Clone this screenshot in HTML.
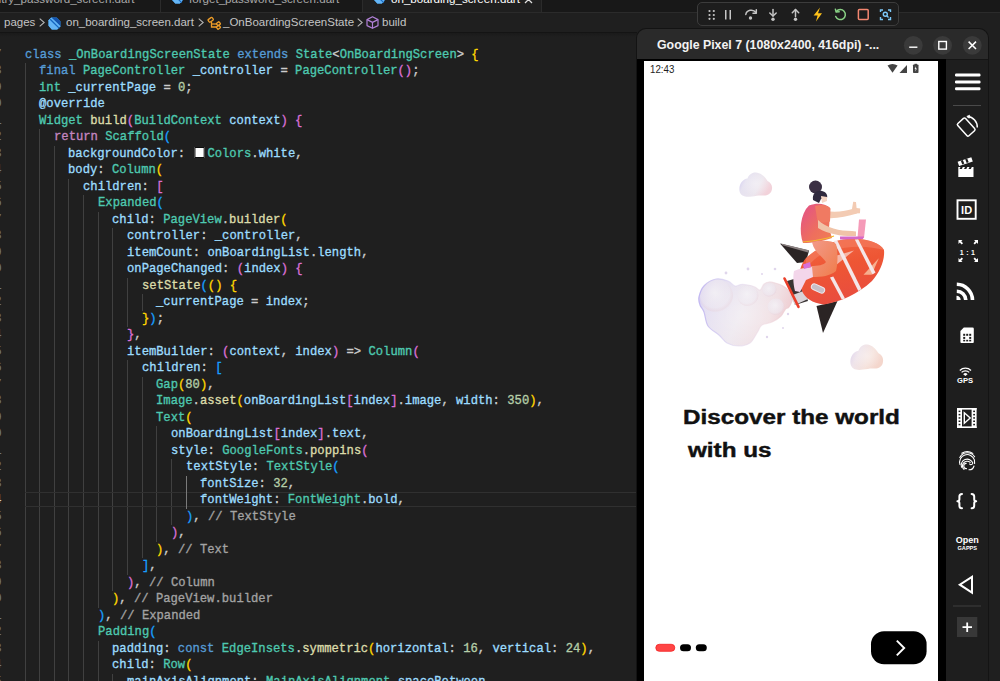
<!DOCTYPE html>
<html><head><meta charset="utf-8">
<style>
html,body{margin:0;padding:0;}
body{width:1000px;height:681px;overflow:hidden;background:#1f1f1f;position:relative;font-family:"Liberation Sans",sans-serif;}
.abs{position:absolute;}
#tabs{position:absolute;left:0;top:0;width:1000px;height:13px;background:#181818;border-bottom:1px solid #2b2b2b;box-sizing:border-box;overflow:hidden;}
.tab{position:absolute;top:0;height:12px;overflow:hidden;}
.tabtxt{position:absolute;white-space:nowrap;font-size:11.6px;line-height:12px;top:-7.4px;color:#a8a8a8;}
#crumbs{position:absolute;left:0;top:13px;width:637px;height:20px;background:#1f1f1f;}
.cr{position:absolute;white-space:nowrap;font-size:11.5px;line-height:14px;top:2.4px;color:#c4c4c4;}
#editor{position:absolute;left:0;top:33px;width:637px;height:648px;overflow:hidden;--x0:24.5px;--y0:13.8px;--lh:16.5px;--cw:7.32px;}
.ln{position:absolute;white-space:pre;font-family:"Liberation Mono",monospace;font-size:13.4px;line-height:16.5px;height:16.5px;transform:scaleX(0.9104);transform-origin:0 0;-webkit-text-stroke:0.35px currentColor;}
.ln span{-webkit-text-stroke:0.35px currentColor;}
.ig{position:absolute;width:1px;background:#404040;}
.lnum{position:absolute;right:calc(637px - 1.8px);white-space:pre;font-family:"Liberation Mono",monospace;font-size:13.4px;line-height:16.5px;height:16.5px;text-align:right;}
.sq{display:inline-block;width:11.53px;height:10.6px;background:#fdfdfd;border:1px solid #0c0c0c;box-sizing:border-box;margin-left:2px;margin-right:3px;vertical-align:-1.2px;}
#tb{position:absolute;left:697px;top:2px;width:202px;height:24px;box-sizing:border-box;border:1px solid #3c3c3c;border-radius:5px;background:#1d1d1d;}
#win{position:absolute;left:637px;top:28.5px;width:351px;height:660px;background:#2a2a2a;border-radius:9px 9px 0 0;overflow:hidden;box-shadow:0 0 0 1px #131313;}
#title{position:absolute;left:20px;top:9.2px;font-size:12.35px;font-weight:bold;color:#f2f2f2;white-space:nowrap;}
.wb{position:absolute;top:6.5px;width:19px;height:19px;border-radius:50%;background:#3b3b3b;}
#screenwrap{position:absolute;left:0;top:30.4px;width:309px;height:640px;background:#000;}
#screen{position:absolute;left:7px;top:1.9px;width:294px;height:640px;background:#fff;overflow:hidden;}
#side{position:absolute;left:309px;top:30.4px;width:42px;height:640px;background:#1e1e1e;border-top:1px solid #151515;}
</style></head><body>
<div id="tabs">
  <div class="tab" style="left:0;width:160px;border-right:1px solid #2b2b2b;"><div class="tabtxt" style="left:-22px;">reentry_password_screen.dart</div></div>
  <div class="tab" style="left:161px;width:201px;border-right:1px solid #2b2b2b;"><div class="abs" style="left:11px;top:-10.3px;"><svg width="11" height="11" viewBox="0 0 12 12"><path d="M3 0.5 L8 0.5 L11.5 4 L11.5 8.5 L8.5 11.5 L3.5 11.5 L0.5 8 L0.5 3 Z" fill="#42a5f5"/><path d="M3 0.5 L8 0.5 L11.5 4 L11.5 8.5 Z" fill="#0d47a1" opacity="0.85"/><path d="M0.5 3 L3 0.5 L11.5 8.5 L8.5 11.5 L3.5 11.5 L0.5 8 Z" fill="#64b5f6"/><path d="M2 2 L10.5 10.5" stroke="#1565c0" stroke-width="1.2"/></svg></div><div class="tabtxt" style="left:28px;">forget_password_screen.dart</div></div>
  <div class="tab" style="left:363px;width:178px;height:13px;background:#1f1f1f;border-right:1px solid #2b2b2b;"><div class="abs" style="left:11px;top:-10.3px;"><svg width="11" height="11" viewBox="0 0 12 12"><path d="M3 0.5 L8 0.5 L11.5 4 L11.5 8.5 L8.5 11.5 L3.5 11.5 L0.5 8 L0.5 3 Z" fill="#42a5f5"/><path d="M3 0.5 L8 0.5 L11.5 4 L11.5 8.5 Z" fill="#0d47a1" opacity="0.85"/><path d="M0.5 3 L3 0.5 L11.5 8.5 L8.5 11.5 L3.5 11.5 L0.5 8 Z" fill="#64b5f6"/><path d="M2 2 L10.5 10.5" stroke="#1565c0" stroke-width="1.2"/></svg></div><div class="tabtxt" style="left:28px;color:#fff;">on_boarding_screen.dart</div><svg class="abs" style="left:161px;top:-5px" width="9" height="9" viewBox="0 0 9 9"><path d="M1 1L8 8M8 1L1 8" stroke="#e0e0e0" stroke-width="1.3"/></svg></div>
</div>
<div id="crumbs">
  <div class="cr" style="left:4px;">pages</div>
  <svg class="abs" style="left:38.5px;top:5.3px" width="6" height="9" viewBox="0 0 6 9"><path d="M0.7 0.6 L5.2 4.5 L0.7 8.4" fill="none" stroke="#b5b5b5" stroke-width="1.1"/></svg>
  <div class="abs" style="left:48px;top:3px;"><svg width="13" height="13" viewBox="0 0 12 12"><path d="M3 0.5 L8 0.5 L11.5 4 L11.5 8.5 L8.5 11.5 L3.5 11.5 L0.5 8 L0.5 3 Z" fill="#42a5f5"/><path d="M3 0.5 L8 0.5 L11.5 4 L11.5 8.5 Z" fill="#0d47a1" opacity="0.85"/><path d="M0.5 3 L3 0.5 L11.5 8.5 L8.5 11.5 L3.5 11.5 L0.5 8 Z" fill="#64b5f6"/><path d="M2 2 L10.5 10.5" stroke="#1565c0" stroke-width="1.2"/></svg></div>
  <div class="cr" style="left:66px;">on_boarding_screen.dart</div>
  <svg class="abs" style="left:197.8px;top:5.3px" width="6" height="9" viewBox="0 0 6 9"><path d="M0.7 0.6 L5.2 4.5 L0.7 8.4" fill="none" stroke="#b5b5b5" stroke-width="1.1"/></svg>
  <svg class="abs" style="left:207px;top:3px" width="15" height="14" viewBox="0 0 15 14"><g fill="none" stroke="#ee9d28" stroke-width="1.3"><rect x="1.2" y="2.2" width="5" height="3.2" rx="1" transform="rotate(-35 3.7 3.8)"/><path d="M4.5 5.5 L4.5 11 L9.5 11"/><path d="M4.5 8 L10 8"/><rect x="9.8" y="6.3" width="3.3" height="3" rx="0.6" transform="rotate(-40 11.4 7.8)"/><rect x="9.8" y="9.8" width="3.3" height="3" rx="0.6" transform="rotate(-40 11.4 11.3)"/></g></svg>
  <div class="cr" style="left:223px;">_OnBoardingScreenState</div>
  <svg class="abs" style="left:356.5px;top:5.3px" width="6" height="9" viewBox="0 0 6 9"><path d="M0.7 0.6 L5.2 4.5 L0.7 8.4" fill="none" stroke="#b5b5b5" stroke-width="1.1"/></svg>
  <svg class="abs" style="left:366px;top:3px" width="13" height="13" viewBox="0 0 13 13"><g fill="none" stroke="#b180d7" stroke-width="1.2" stroke-linejoin="round"><path d="M6.5 0.8 L12 3.6 L12 9.6 L6.5 12.3 L1 9.6 L1 3.6 Z"/><path d="M1 3.6 L6.5 6.4 L12 3.6 M6.5 6.4 L6.5 12.3"/></g></svg>
  <div class="cr" style="left:382px;">build</div>
</div>
<div class="abs" style="left:0;top:32px;width:637px;height:1px;background:#141414;"></div>
<div class="abs" style="left:0;top:33px;width:637px;height:4px;background:linear-gradient(#1a1a1a,#1f1f1f);"></div>
<div id="editor">
<div class="ln" style="top:calc(var(--y0) + 0*var(--lh));left:calc(var(--x0) + 0*var(--cw))"><span style="color:#569cd6">class</span><span style="color:#cccccc">&nbsp;</span><span style="color:#4ec9b0">_OnBoardingScreenState</span><span style="color:#cccccc">&nbsp;</span><span style="color:#569cd6">extends</span><span style="color:#cccccc">&nbsp;</span><span style="color:#4ec9b0">State</span><span style="color:#cccccc">&lt;</span><span style="color:#4ec9b0">OnBoardingScreen</span><span style="color:#cccccc">&gt;&nbsp;</span><span style="color:#ffd700">{</span></div>
<div class="ln" style="top:calc(var(--y0) + 1*var(--lh));left:calc(var(--x0) + 2*var(--cw))"><span style="color:#569cd6">final</span><span style="color:#cccccc">&nbsp;</span><span style="color:#4ec9b0">PageController</span><span style="color:#cccccc">&nbsp;</span><span style="color:#9cdcfe">_controller</span><span style="color:#cccccc">&nbsp;=&nbsp;</span><span style="color:#4ec9b0">PageController</span><span style="color:#da70d6">()</span><span style="color:#cccccc">;</span></div>
<div class="ln" style="top:calc(var(--y0) + 2*var(--lh));left:calc(var(--x0) + 2*var(--cw))"><span style="color:#4ec9b0">int</span><span style="color:#cccccc">&nbsp;</span><span style="color:#9cdcfe">_currentPage</span><span style="color:#cccccc">&nbsp;=&nbsp;</span><span style="color:#b5cea8">0</span><span style="color:#cccccc">;</span></div>
<div class="ln" style="top:calc(var(--y0) + 3*var(--lh));left:calc(var(--x0) + 2*var(--cw))"><span style="color:#9cdcfe">@override</span></div>
<div class="ln" style="top:calc(var(--y0) + 4*var(--lh));left:calc(var(--x0) + 2*var(--cw))"><span style="color:#4ec9b0">Widget</span><span style="color:#cccccc">&nbsp;</span><span style="color:#dcdcaa">build</span><span style="color:#da70d6">(</span><span style="color:#4ec9b0">BuildContext</span><span style="color:#cccccc">&nbsp;</span><span style="color:#9cdcfe">context</span><span style="color:#da70d6">)</span><span style="color:#cccccc">&nbsp;</span><span style="color:#da70d6">{</span></div>
<div class="ln" style="top:calc(var(--y0) + 5*var(--lh));left:calc(var(--x0) + 4*var(--cw))"><span style="color:#c586c0">return</span><span style="color:#cccccc">&nbsp;</span><span style="color:#4ec9b0">Scaffold</span><span style="color:#179fff">(</span></div>
<div class="ln" style="top:calc(var(--y0) + 6*var(--lh));left:calc(var(--x0) + 6*var(--cw))"><span style="color:#9cdcfe">backgroundColor</span><span style="color:#cccccc">:&nbsp;</span><i class="sq"></i><span style="color:#4ec9b0">Colors</span><span style="color:#cccccc">.</span><span style="color:#9cdcfe">white</span><span style="color:#cccccc">,</span></div>
<div class="ln" style="top:calc(var(--y0) + 7*var(--lh));left:calc(var(--x0) + 6*var(--cw))"><span style="color:#9cdcfe">body</span><span style="color:#cccccc">:&nbsp;</span><span style="color:#4ec9b0">Column</span><span style="color:#ffd700">(</span></div>
<div class="ln" style="top:calc(var(--y0) + 8*var(--lh));left:calc(var(--x0) + 8*var(--cw))"><span style="color:#9cdcfe">children</span><span style="color:#cccccc">:&nbsp;</span><span style="color:#da70d6">[</span></div>
<div class="ln" style="top:calc(var(--y0) + 9*var(--lh));left:calc(var(--x0) + 10*var(--cw))"><span style="color:#4ec9b0">Expanded</span><span style="color:#179fff">(</span></div>
<div class="ln" style="top:calc(var(--y0) + 10*var(--lh));left:calc(var(--x0) + 12*var(--cw))"><span style="color:#9cdcfe">child</span><span style="color:#cccccc">:&nbsp;</span><span style="color:#4ec9b0">PageView</span><span style="color:#cccccc">.</span><span style="color:#dcdcaa">builder</span><span style="color:#ffd700">(</span></div>
<div class="ln" style="top:calc(var(--y0) + 11*var(--lh));left:calc(var(--x0) + 14*var(--cw))"><span style="color:#9cdcfe">controller</span><span style="color:#cccccc">:&nbsp;</span><span style="color:#9cdcfe">_controller</span><span style="color:#cccccc">,</span></div>
<div class="ln" style="top:calc(var(--y0) + 12*var(--lh));left:calc(var(--x0) + 14*var(--cw))"><span style="color:#9cdcfe">itemCount</span><span style="color:#cccccc">:&nbsp;</span><span style="color:#9cdcfe">onBoardingList</span><span style="color:#cccccc">.</span><span style="color:#9cdcfe">length</span><span style="color:#cccccc">,</span></div>
<div class="ln" style="top:calc(var(--y0) + 13*var(--lh));left:calc(var(--x0) + 14*var(--cw))"><span style="color:#9cdcfe">onPageChanged</span><span style="color:#cccccc">:&nbsp;</span><span style="color:#da70d6">(</span><span style="color:#9cdcfe">index</span><span style="color:#da70d6">)</span><span style="color:#cccccc">&nbsp;</span><span style="color:#da70d6">{</span></div>
<div class="ln" style="top:calc(var(--y0) + 14*var(--lh));left:calc(var(--x0) + 16*var(--cw))"><span style="color:#dcdcaa">setState</span><span style="color:#179fff">(</span><span style="color:#ffd700">()</span><span style="color:#cccccc">&nbsp;</span><span style="color:#ffd700">{</span></div>
<div class="ln" style="top:calc(var(--y0) + 15*var(--lh));left:calc(var(--x0) + 18*var(--cw))"><span style="color:#9cdcfe">_currentPage</span><span style="color:#cccccc">&nbsp;=&nbsp;</span><span style="color:#9cdcfe">index</span><span style="color:#cccccc">;</span></div>
<div class="ln" style="top:calc(var(--y0) + 16*var(--lh));left:calc(var(--x0) + 16*var(--cw))"><span style="color:#ffd700">}</span><span style="color:#179fff">)</span><span style="color:#cccccc">;</span></div>
<div class="ln" style="top:calc(var(--y0) + 17*var(--lh));left:calc(var(--x0) + 14*var(--cw))"><span style="color:#da70d6">}</span><span style="color:#cccccc">,</span></div>
<div class="ln" style="top:calc(var(--y0) + 18*var(--lh));left:calc(var(--x0) + 14*var(--cw))"><span style="color:#9cdcfe">itemBuilder</span><span style="color:#cccccc">:&nbsp;</span><span style="color:#da70d6">(</span><span style="color:#9cdcfe">context</span><span style="color:#cccccc">,&nbsp;</span><span style="color:#9cdcfe">index</span><span style="color:#da70d6">)</span><span style="color:#cccccc">&nbsp;=&gt;&nbsp;</span><span style="color:#4ec9b0">Column</span><span style="color:#da70d6">(</span></div>
<div class="ln" style="top:calc(var(--y0) + 19*var(--lh));left:calc(var(--x0) + 16*var(--cw))"><span style="color:#9cdcfe">children</span><span style="color:#cccccc">:&nbsp;</span><span style="color:#179fff">[</span></div>
<div class="ln" style="top:calc(var(--y0) + 20*var(--lh));left:calc(var(--x0) + 18*var(--cw))"><span style="color:#4ec9b0">Gap</span><span style="color:#ffd700">(</span><span style="color:#b5cea8">80</span><span style="color:#ffd700">)</span><span style="color:#cccccc">,</span></div>
<div class="ln" style="top:calc(var(--y0) + 21*var(--lh));left:calc(var(--x0) + 18*var(--cw))"><span style="color:#4ec9b0">Image</span><span style="color:#cccccc">.</span><span style="color:#dcdcaa">asset</span><span style="color:#ffd700">(</span><span style="color:#9cdcfe">onBoardingList</span><span style="color:#da70d6">[</span><span style="color:#9cdcfe">index</span><span style="color:#da70d6">]</span><span style="color:#cccccc">.</span><span style="color:#9cdcfe">image</span><span style="color:#cccccc">,&nbsp;</span><span style="color:#9cdcfe">width</span><span style="color:#cccccc">:&nbsp;</span><span style="color:#b5cea8">350</span><span style="color:#ffd700">)</span><span style="color:#cccccc">,</span></div>
<div class="ln" style="top:calc(var(--y0) + 22*var(--lh));left:calc(var(--x0) + 18*var(--cw))"><span style="color:#4ec9b0">Text</span><span style="color:#ffd700">(</span></div>
<div class="ln" style="top:calc(var(--y0) + 23*var(--lh));left:calc(var(--x0) + 20*var(--cw))"><span style="color:#9cdcfe">onBoardingList</span><span style="color:#da70d6">[</span><span style="color:#9cdcfe">index</span><span style="color:#da70d6">]</span><span style="color:#cccccc">.</span><span style="color:#9cdcfe">text</span><span style="color:#cccccc">,</span></div>
<div class="ln" style="top:calc(var(--y0) + 24*var(--lh));left:calc(var(--x0) + 20*var(--cw))"><span style="color:#9cdcfe">style</span><span style="color:#cccccc">:&nbsp;</span><span style="color:#4ec9b0">GoogleFonts</span><span style="color:#cccccc">.</span><span style="color:#dcdcaa">poppins</span><span style="color:#da70d6">(</span></div>
<div class="ln" style="top:calc(var(--y0) + 25*var(--lh));left:calc(var(--x0) + 22*var(--cw))"><span style="color:#9cdcfe">textStyle</span><span style="color:#cccccc">:&nbsp;</span><span style="color:#4ec9b0">TextStyle</span><span style="color:#179fff">(</span></div>
<div class="ln" style="top:calc(var(--y0) + 26*var(--lh));left:calc(var(--x0) + 24*var(--cw))"><span style="color:#9cdcfe">fontSize</span><span style="color:#cccccc">:&nbsp;</span><span style="color:#b5cea8">32</span><span style="color:#cccccc">,</span></div>
<div class="ln" style="top:calc(var(--y0) + 27*var(--lh));left:calc(var(--x0) + 24*var(--cw))"><span style="color:#9cdcfe">fontWeight</span><span style="color:#cccccc">:&nbsp;</span><span style="color:#4ec9b0">FontWeight</span><span style="color:#cccccc">.</span><span style="color:#9cdcfe">bold</span><span style="color:#cccccc">,</span></div>
<div class="ln" style="top:calc(var(--y0) + 28*var(--lh));left:calc(var(--x0) + 22*var(--cw))"><span style="color:#179fff">)</span><span style="color:#cccccc">,&nbsp;</span><span style="color:#a3a3a3">//&nbsp;TextStyle</span></div>
<div class="ln" style="top:calc(var(--y0) + 29*var(--lh));left:calc(var(--x0) + 20*var(--cw))"><span style="color:#da70d6">)</span><span style="color:#cccccc">,</span></div>
<div class="ln" style="top:calc(var(--y0) + 30*var(--lh));left:calc(var(--x0) + 18*var(--cw))"><span style="color:#ffd700">)</span><span style="color:#cccccc">,&nbsp;</span><span style="color:#a3a3a3">//&nbsp;Text</span></div>
<div class="ln" style="top:calc(var(--y0) + 31*var(--lh));left:calc(var(--x0) + 16*var(--cw))"><span style="color:#179fff">]</span><span style="color:#cccccc">,</span></div>
<div class="ln" style="top:calc(var(--y0) + 32*var(--lh));left:calc(var(--x0) + 14*var(--cw))"><span style="color:#da70d6">)</span><span style="color:#cccccc">,&nbsp;</span><span style="color:#a3a3a3">//&nbsp;Column</span></div>
<div class="ln" style="top:calc(var(--y0) + 33*var(--lh));left:calc(var(--x0) + 12*var(--cw))"><span style="color:#ffd700">)</span><span style="color:#cccccc">,&nbsp;</span><span style="color:#a3a3a3">//&nbsp;PageView.builder</span></div>
<div class="ln" style="top:calc(var(--y0) + 34*var(--lh));left:calc(var(--x0) + 10*var(--cw))"><span style="color:#179fff">)</span><span style="color:#cccccc">,&nbsp;</span><span style="color:#a3a3a3">//&nbsp;Expanded</span></div>
<div class="ln" style="top:calc(var(--y0) + 35*var(--lh));left:calc(var(--x0) + 10*var(--cw))"><span style="color:#4ec9b0">Padding</span><span style="color:#179fff">(</span></div>
<div class="ln" style="top:calc(var(--y0) + 36*var(--lh));left:calc(var(--x0) + 12*var(--cw))"><span style="color:#9cdcfe">padding</span><span style="color:#cccccc">:&nbsp;</span><span style="color:#569cd6">const</span><span style="color:#cccccc">&nbsp;</span><span style="color:#4ec9b0">EdgeInsets</span><span style="color:#cccccc">.</span><span style="color:#dcdcaa">symmetric</span><span style="color:#ffd700">(</span><span style="color:#9cdcfe">horizontal</span><span style="color:#cccccc">:&nbsp;</span><span style="color:#b5cea8">16</span><span style="color:#cccccc">,&nbsp;</span><span style="color:#9cdcfe">vertical</span><span style="color:#cccccc">:&nbsp;</span><span style="color:#b5cea8">24</span><span style="color:#ffd700">)</span><span style="color:#cccccc">,</span></div>
<div class="ln" style="top:calc(var(--y0) + 37*var(--lh));left:calc(var(--x0) + 12*var(--cw))"><span style="color:#9cdcfe">child</span><span style="color:#cccccc">:&nbsp;</span><span style="color:#4ec9b0">Row</span><span style="color:#ffd700">(</span></div>
<div class="ln" style="top:calc(var(--y0) + 38*var(--lh));left:calc(var(--x0) + 14*var(--cw))"><span style="color:#9cdcfe">mainAxisAlignment</span><span style="color:#cccccc">:&nbsp;</span><span style="color:#4ec9b0">MainAxisAlignment</span><span style="color:#cccccc">.</span><span style="color:#9cdcfe">spaceBetween</span><span style="color:#cccccc">,</span></div>
<div class="ig" style="left:calc(var(--x0) + 0*var(--cw));top:calc(var(--y0) + 1*var(--lh));height:calc(38*var(--lh))"></div>
<div class="ig" style="left:calc(var(--x0) + 2*var(--cw));top:calc(var(--y0) + 5*var(--lh));height:calc(34*var(--lh))"></div>
<div class="ig" style="left:calc(var(--x0) + 4*var(--cw));top:calc(var(--y0) + 6*var(--lh));height:calc(33*var(--lh))"></div>
<div class="ig" style="left:calc(var(--x0) + 6*var(--cw));top:calc(var(--y0) + 8*var(--lh));height:calc(31*var(--lh))"></div>
<div class="ig" style="left:calc(var(--x0) + 8*var(--cw));top:calc(var(--y0) + 9*var(--lh));height:calc(30*var(--lh))"></div>
<div class="ig" style="left:calc(var(--x0) + 10*var(--cw));top:calc(var(--y0) + 10*var(--lh));height:calc(24*var(--lh))"></div>
<div class="ig" style="left:calc(var(--x0) + 10*var(--cw));top:calc(var(--y0) + 36*var(--lh));height:calc(3*var(--lh))"></div>
<div class="ig" style="left:calc(var(--x0) + 12*var(--cw));top:calc(var(--y0) + 11*var(--lh));height:calc(22*var(--lh))"></div>
<div class="ig" style="left:calc(var(--x0) + 12*var(--cw));top:calc(var(--y0) + 38*var(--lh));height:calc(1*var(--lh))"></div>
<div class="ig" style="left:calc(var(--x0) + 14*var(--cw));top:calc(var(--y0) + 14*var(--lh));height:calc(3*var(--lh))"></div>
<div class="ig" style="left:calc(var(--x0) + 14*var(--cw));top:calc(var(--y0) + 19*var(--lh));height:calc(13*var(--lh))"></div>
<div class="ig" style="left:calc(var(--x0) + 16*var(--cw));top:calc(var(--y0) + 15*var(--lh));height:calc(1*var(--lh))"></div>
<div class="ig" style="left:calc(var(--x0) + 16*var(--cw));top:calc(var(--y0) + 20*var(--lh));height:calc(11*var(--lh))"></div>
<div class="ig" style="left:calc(var(--x0) + 18*var(--cw));top:calc(var(--y0) + 23*var(--lh));height:calc(7*var(--lh))"></div>
<div class="ig" style="left:calc(var(--x0) + 20*var(--cw));top:calc(var(--y0) + 25*var(--lh));height:calc(4*var(--lh))"></div>
<div class="ig" style="left:calc(var(--x0) + 22*var(--cw));top:calc(var(--y0) + 26*var(--lh));height:calc(2*var(--lh))"></div>
<div class="abs" style="left:24.5px;top:459px;width:613px;height:15.4px;box-sizing:border-box;border-top:1px solid #303030;border-bottom:1px solid #303030;"></div>
<div class="ig" style="left:calc(var(--x0) + 22*var(--cw));top:calc(var(--y0) + 26*var(--lh));height:calc(2*var(--lh));background:#7a7a7a;"></div>
<div class="lnum" style="top:calc(var(--y0) + 0*var(--lh));color:#6e7681">57</div>
<div class="lnum" style="top:calc(var(--y0) + 1*var(--lh));color:#6e7681">58</div>
<div class="lnum" style="top:calc(var(--y0) + 2*var(--lh));color:#6e7681">59</div>
<div class="lnum" style="top:calc(var(--y0) + 3*var(--lh));color:#6e7681">60</div>
<div class="lnum" style="top:calc(var(--y0) + 4*var(--lh));color:#6e7681">61</div>
<div class="lnum" style="top:calc(var(--y0) + 5*var(--lh));color:#6e7681">62</div>
<div class="lnum" style="top:calc(var(--y0) + 6*var(--lh));color:#6e7681">63</div>
<div class="lnum" style="top:calc(var(--y0) + 7*var(--lh));color:#6e7681">64</div>
<div class="lnum" style="top:calc(var(--y0) + 8*var(--lh));color:#6e7681">65</div>
<div class="lnum" style="top:calc(var(--y0) + 9*var(--lh));color:#6e7681">66</div>
<div class="lnum" style="top:calc(var(--y0) + 10*var(--lh));color:#6e7681">67</div>
<div class="lnum" style="top:calc(var(--y0) + 11*var(--lh));color:#6e7681">68</div>
<div class="lnum" style="top:calc(var(--y0) + 12*var(--lh));color:#6e7681">69</div>
<div class="lnum" style="top:calc(var(--y0) + 13*var(--lh));color:#6e7681">70</div>
<div class="lnum" style="top:calc(var(--y0) + 14*var(--lh));color:#6e7681">71</div>
<div class="lnum" style="top:calc(var(--y0) + 15*var(--lh));color:#6e7681">72</div>
<div class="lnum" style="top:calc(var(--y0) + 16*var(--lh));color:#6e7681">73</div>
<div class="lnum" style="top:calc(var(--y0) + 17*var(--lh));color:#6e7681">74</div>
<div class="lnum" style="top:calc(var(--y0) + 18*var(--lh));color:#6e7681">75</div>
<div class="lnum" style="top:calc(var(--y0) + 19*var(--lh));color:#6e7681">76</div>
<div class="lnum" style="top:calc(var(--y0) + 20*var(--lh));color:#6e7681">77</div>
<div class="lnum" style="top:calc(var(--y0) + 21*var(--lh));color:#6e7681">78</div>
<div class="lnum" style="top:calc(var(--y0) + 22*var(--lh));color:#6e7681">79</div>
<div class="lnum" style="top:calc(var(--y0) + 23*var(--lh));color:#6e7681">80</div>
<div class="lnum" style="top:calc(var(--y0) + 24*var(--lh));color:#6e7681">81</div>
<div class="lnum" style="top:calc(var(--y0) + 25*var(--lh));color:#6e7681">82</div>
<div class="lnum" style="top:calc(var(--y0) + 26*var(--lh));color:#6e7681">83</div>
<div class="lnum" style="top:calc(var(--y0) + 27*var(--lh));color:#cccccc">84</div>
<div class="lnum" style="top:calc(var(--y0) + 28*var(--lh));color:#6e7681">85</div>
<div class="lnum" style="top:calc(var(--y0) + 29*var(--lh));color:#6e7681">86</div>
<div class="lnum" style="top:calc(var(--y0) + 30*var(--lh));color:#6e7681">87</div>
<div class="lnum" style="top:calc(var(--y0) + 31*var(--lh));color:#6e7681">88</div>
<div class="lnum" style="top:calc(var(--y0) + 32*var(--lh));color:#6e7681">89</div>
<div class="lnum" style="top:calc(var(--y0) + 33*var(--lh));color:#6e7681">90</div>
<div class="lnum" style="top:calc(var(--y0) + 34*var(--lh));color:#6e7681">91</div>
<div class="lnum" style="top:calc(var(--y0) + 35*var(--lh));color:#6e7681">92</div>
<div class="lnum" style="top:calc(var(--y0) + 36*var(--lh));color:#6e7681">93</div>
<div class="lnum" style="top:calc(var(--y0) + 37*var(--lh));color:#6e7681">94</div>
<div class="lnum" style="top:calc(var(--y0) + 38*var(--lh));color:#6e7681">95</div>
</div>
<div id="tb">
<svg class="abs" style="left:0;top:0" width="202" height="24" viewBox="697 2 202 24">
<g fill="#c5c5c5">
<circle cx="708.5" cy="10" r="1.1"/><circle cx="712.8" cy="10" r="1.1"/>
<circle cx="708.5" cy="14" r="1.1"/><circle cx="712.8" cy="14" r="1.1"/>
<circle cx="708.5" cy="17.8" r="1.1"/><circle cx="712.8" cy="17.8" r="1.1"/>
<rect x="724" y="9" width="1.5" height="9.5"/><rect x="728.5" y="9" width="1.5" height="9.5"/>
<circle cx="749.5" cy="17" r="1.7"/><circle cx="772" cy="18.2" r="1.7"/><circle cx="794.5" cy="18.2" r="1.7"/>
</g>
<g fill="none" stroke="#c5c5c5" stroke-width="1.5" stroke-linecap="round" stroke-linejoin="round">
<path d="M744.8 13.5 C745.5 9 752 7.5 755 11.5"/><path d="M752 12.2 L755.3 12.2 L755.3 8.8"/>
<path d="M772 8.5 L772 15"/><path d="M768.8 12 L772 15 L775.2 12"/>
<path d="M794.5 15.5 L794.5 8.5"/><path d="M791.3 11.7 L794.5 8.5 L797.7 11.7"/>
</g>
<path d="M819 6.5 L812.6 14.6 L816.6 14.6 L815 20.5 L821 12.2 L817 12.2 Z" fill="#ffc21a"/>
<g fill="none" stroke="#89d185" stroke-width="1.5" stroke-linecap="round"><path d="M835.4 10.5 A5 5 0 1 1 834.7 15.5"/><path d="M834.4 8.2 L835.2 11 L838.2 10.8"/></g>
<rect x="857.4" y="8.6" width="9.8" height="9.8" rx="1" fill="none" stroke="#f48771" stroke-width="1.5"/>
<g fill="none" stroke="#7cc8f8" stroke-width="1.4" transform="translate(-0.5 0)"><path d="M880 11 L880 9 L882.5 9 M887.5 9 L890 9 L890 11 M890 16 L890 18.5 L887.5 18.5 M882.5 18.5 L880 18.5 L880 16"/><circle cx="884.8" cy="13.3" r="2"/><path d="M886.2 14.8 L888 16.5"/></g>
</svg>
</div>
<div id="win">
  <div id="title">Google Pixel 7 (1080x2400, 416dpi) -...</div>
  <svg class="abs" style="left:0;top:0" width="351" height="33" viewBox="637 28 351 33">
    <circle cx="913.3" cy="44.3" r="9.4" fill="#3a3a3a"/>
    <circle cx="942.6" cy="44.3" r="9.4" fill="#3a3a3a"/>
    <circle cx="972.3" cy="44.3" r="9.4" fill="#3a3a3a"/>
    <rect x="909.2" y="45.5" width="8.2" height="1.4" fill="#fff"/>
    <rect x="938.8" y="40.5" width="7.6" height="7.6" fill="none" stroke="#fff" stroke-width="1.4"/>
    <path d="M968.6 40.6 L976 48 M976 40.6 L968.6 48" stroke="#fff" stroke-width="1.5"/>
  </svg>
  <div id="screenwrap"><div id="screen"><svg class="abs" style="left:0;top:0" width="294" height="640" viewBox="644 61 294 640">
 <text transform="translate(650 73) scale(0.9 1)" font-family="Liberation Sans" font-size="10.8" fill="#1e1e1e">12:43</text>
 <path d="M887.5 65.5 Q892.5 62.5 897.6 65.5 L892.5 72.7 Z" fill="#444"/>
 <path d="M907 65 L907 73 L899.5 73 Z" fill="#444"/>
 <rect x="913" y="64.5" width="5.5" height="8.5" rx="0.8" fill="#444"/><rect x="914.5" y="63.8" width="2.5" height="1.2" fill="#444"/>
 <path d="M916 66.2 L914.6 69 L915.6 69 L915.4 71.6 L916.9 68.4 L915.9 68.4 Z" fill="#fff"/>
 <!--ILLU-->
 <defs>
  <radialGradient id="cg" cx="0.6" cy="0.4" r="0.7"><stop offset="0" stop-color="#f7f3f5"/><stop offset="0.65" stop-color="#efe6ee"/><stop offset="1" stop-color="#d2c6f0"/></radialGradient>
  <radialGradient id="cg2" cx="0.45" cy="0.35" r="0.75"><stop offset="0" stop-color="#f8f5f6"/><stop offset="0.6" stop-color="#efe6ec"/><stop offset="1" stop-color="#e6cfdc"/></radialGradient>
  <radialGradient id="pf" cx="0.45" cy="0.35" r="0.65"><stop offset="0" stop-color="#f9f6f9"/><stop offset="0.7" stop-color="#ece3ec"/><stop offset="1" stop-color="#e3cbd6"/></radialGradient>
  <linearGradient id="rk" x1="0" y1="0" x2="0.3" y2="1"><stop offset="0" stop-color="#f26a48"/><stop offset="0.5" stop-color="#ee5634"/><stop offset="1" stop-color="#e94d3e"/></linearGradient>
  <linearGradient id="sh" x1="0" y1="0" x2="1" y2="1"><stop offset="0" stop-color="#e2508a"/><stop offset="0.6" stop-color="#ee6f5d"/><stop offset="1" stop-color="#f07e55"/></linearGradient>
  <linearGradient id="lg" x1="0" y1="0" x2="1" y2="1"><stop offset="0" stop-color="#f29a8a"/><stop offset="1" stop-color="#f07c4a"/></linearGradient>
 <linearGradient id="sc1" x1="0" y1="0" x2="1" y2="0.4"><stop offset="0" stop-color="#cbc3f2"/><stop offset="0.3" stop-color="#e6e2f0"/><stop offset="0.7" stop-color="#ece6ee"/><stop offset="1" stop-color="#f2d2da"/></linearGradient>
  <linearGradient id="sc2" x1="0" y1="0" x2="1" y2="0.4"><stop offset="0" stop-color="#d9d0ee"/><stop offset="0.35" stop-color="#efe4ea"/><stop offset="0.7" stop-color="#f5e2dc"/><stop offset="1" stop-color="#f4d6cc"/></linearGradient>
  <radialGradient id="sc1h" cx="0.5" cy="0.45" r="0.5"><stop offset="0" stop-color="#ffffff" stop-opacity="0.35"/><stop offset="1" stop-color="#ffffff" stop-opacity="0"/></radialGradient>
 <linearGradient id="bc" x1="0" y1="0" x2="1" y2="0.3"><stop offset="0" stop-color="#cdc3f2"/><stop offset="0.18" stop-color="#e4dff2"/><stop offset="0.55" stop-color="#eee8ef"/><stop offset="0.85" stop-color="#f0dfe3"/><stop offset="1" stop-color="#efd0d4"/></linearGradient>
  <radialGradient id="bp" cx="0.45" cy="0.4" r="0.6"><stop offset="0" stop-color="#f3f0f5" stop-opacity="0.9"/><stop offset="0.75" stop-color="#ece6ef" stop-opacity="0.6"/><stop offset="0.92" stop-color="#e6d2dc" stop-opacity="0.5"/><stop offset="1" stop-color="#e6d2dc" stop-opacity="0"/></radialGradient>
  <radialGradient id="bch" cx="0.5" cy="0.55" r="0.5"><stop offset="0" stop-color="#ffffff" stop-opacity="0.3"/><stop offset="1" stop-color="#ffffff" stop-opacity="0"/></radialGradient>
 <linearGradient id="bcs" x1="0" y1="0" x2="1" y2="0"><stop offset="0" stop-color="#bdb2f0" stop-opacity="0.9"/><stop offset="0.35" stop-color="#d8d0f0" stop-opacity="0.5"/><stop offset="0.7" stop-color="#eed8e0" stop-opacity="0.5"/><stop offset="1" stop-color="#ecc8cc" stop-opacity="0.8"/></linearGradient>
 </defs>
 <!-- small top cloud -->
 <path d="M739.5 191 C738.5 184 743 179 747.5 178.5 C749 174 753 172.3 756 172.5 C761 172.8 765 177 767.5 181 C771 182.5 772.5 186 772 189 C771.5 194 767 195.8 763 195.5 C759 195.2 756 196 752 196.5 C746 197.5 740.5 196.5 739.5 191 Z" fill="url(#sc1)"/>
 <path d="M739.5 191 C738.5 184 743 179 747.5 178.5 C749 174 753 172.3 756 172.5 C761 172.8 765 177 767.5 181 C771 182.5 772.5 186 772 189 C771.5 194 767 195.8 763 195.5 C759 195.2 756 196 752 196.5 C746 197.5 740.5 196.5 739.5 191 Z" fill="url(#sc1h)"/>
 <!-- small bottom-right cloud -->
 <g transform="translate(111 172.5) translate(755.5 184.5) scale(1 1.05) translate(-755.5 -184.5)"><path d="M739.5 191 C738.5 184 743 179 747.5 178.5 C749 174 753 172.3 756 172.5 C761 172.8 765 177 767.5 181 C771 182.5 772.5 186 772 189 C771.5 194 767 195.8 763 195.5 C759 195.2 756 196 752 196.5 C746 197.5 740.5 196.5 739.5 191 Z" fill="url(#sc2)"/><path d="M739.5 191 C738.5 184 743 179 747.5 178.5 C749 174 753 172.3 756 172.5 C761 172.8 765 177 767.5 181 C771 182.5 772.5 186 772 189 C771.5 194 767 195.8 763 195.5 C759 195.2 756 196 752 196.5 C746 197.5 740.5 196.5 739.5 191 Z" fill="url(#sc1h)"/></g>
 <!-- big cloud -->
 <path d="M699.0 297.0 C699.7 293.8 701.2 289.0 704.0 286.0 C706.8 283.0 712.0 279.8 716.0 279.0 C720.0 278.2 724.8 279.8 728.0 281.0 C731.2 282.2 732.8 285.4 735.0 286.0 C737.2 286.6 738.8 284.7 741.0 284.5 C743.2 284.3 745.7 284.6 748.0 285.0 C750.3 285.4 753.0 286.2 755.0 287.0 C757.0 287.8 758.5 290.5 760.0 290.0 C761.5 289.5 762.5 285.3 764.0 284.0 C765.5 282.7 767.2 282.2 769.0 282.0 C770.8 281.8 772.8 282.4 775.0 283.0 C777.2 283.6 779.8 284.3 782.0 285.5 C784.2 286.7 786.3 287.8 788.0 290.0 C789.7 292.2 791.8 296.2 792.0 299.0 C792.2 301.8 790.1 305.3 789.0 307.0 C787.9 308.7 786.8 307.5 785.5 309.0 C784.2 310.5 783.2 313.8 781.0 316.0 C778.8 318.2 775.2 320.5 772.0 322.0 C768.8 323.5 764.5 323.2 762.0 325.0 C759.5 326.8 759.0 330.0 757.0 333.0 C755.0 336.0 753.1 340.8 750.0 343.0 C746.9 345.2 742.3 346.0 738.5 346.0 C734.7 346.0 730.2 344.8 727.0 343.0 C723.8 341.2 722.2 337.8 719.0 335.0 C715.8 332.2 710.5 329.8 708.0 326.0 C705.5 322.2 705.3 315.5 704.0 312.0 C702.7 308.5 700.8 307.5 700.0 305.0 C699.2 302.5 698.3 300.2 699.0 297.0 Z" fill="url(#bc)"/>
 <circle cx="716.5" cy="296" r="16.5" fill="url(#bp)"/>
 <circle cx="748" cy="296" r="10.5" fill="url(#bp)"/>
 <circle cx="769.5" cy="290" r="7" fill="url(#bp)"/>
 <circle cx="776" cy="307" r="8.5" fill="url(#bp)"/>
 <path d="M699.0 297.0 C699.7 293.8 701.2 289.0 704.0 286.0 C706.8 283.0 712.0 279.8 716.0 279.0 C720.0 278.2 724.8 279.8 728.0 281.0 C731.2 282.2 732.8 285.4 735.0 286.0 C737.2 286.6 738.8 284.7 741.0 284.5 C743.2 284.3 745.7 284.6 748.0 285.0 C750.3 285.4 753.0 286.2 755.0 287.0 C757.0 287.8 758.5 290.5 760.0 290.0 C761.5 289.5 762.5 285.3 764.0 284.0 C765.5 282.7 767.2 282.2 769.0 282.0 C770.8 281.8 772.8 282.4 775.0 283.0 C777.2 283.6 779.8 284.3 782.0 285.5 C784.2 286.7 786.3 287.8 788.0 290.0 C789.7 292.2 791.8 296.2 792.0 299.0 C792.2 301.8 790.1 305.3 789.0 307.0 C787.9 308.7 786.8 307.5 785.5 309.0 C784.2 310.5 783.2 313.8 781.0 316.0 C778.8 318.2 775.2 320.5 772.0 322.0 C768.8 323.5 764.5 323.2 762.0 325.0 C759.5 326.8 759.0 330.0 757.0 333.0 C755.0 336.0 753.1 340.8 750.0 343.0 C746.9 345.2 742.3 346.0 738.5 346.0 C734.7 346.0 730.2 344.8 727.0 343.0 C723.8 341.2 722.2 337.8 719.0 335.0 C715.8 332.2 710.5 329.8 708.0 326.0 C705.5 322.2 705.3 315.5 704.0 312.0 C702.7 308.5 700.8 307.5 700.0 305.0 C699.2 302.5 698.3 300.2 699.0 297.0 Z" fill="url(#bch)"/>
 <path d="M699.0 297.0 C699.7 293.8 701.2 289.0 704.0 286.0 C706.8 283.0 712.0 279.8 716.0 279.0 C720.0 278.2 724.8 279.8 728.0 281.0 C731.2 282.2 732.8 285.4 735.0 286.0 C737.2 286.6 738.8 284.7 741.0 284.5 C743.2 284.3 745.7 284.6 748.0 285.0 C750.3 285.4 753.0 286.2 755.0 287.0 C757.0 287.8 758.5 290.5 760.0 290.0 C761.5 289.5 762.5 285.3 764.0 284.0 C765.5 282.7 767.2 282.2 769.0 282.0 C770.8 281.8 772.8 282.4 775.0 283.0 C777.2 283.6 779.8 284.3 782.0 285.5 C784.2 286.7 786.3 287.8 788.0 290.0 C789.7 292.2 791.8 296.2 792.0 299.0 C792.2 301.8 790.1 305.3 789.0 307.0 C787.9 308.7 786.8 307.5 785.5 309.0 C784.2 310.5 783.2 313.8 781.0 316.0 C778.8 318.2 775.2 320.5 772.0 322.0 C768.8 323.5 764.5 323.2 762.0 325.0 C759.5 326.8 759.0 330.0 757.0 333.0 C755.0 336.0 753.1 340.8 750.0 343.0 C746.9 345.2 742.3 346.0 738.5 346.0 C734.7 346.0 730.2 344.8 727.0 343.0 C723.8 341.2 722.2 337.8 719.0 335.0 C715.8 332.2 710.5 329.8 708.0 326.0 C705.5 322.2 705.3 315.5 704.0 312.0 C702.7 308.5 700.8 307.5 700.0 305.0 C699.2 302.5 698.3 300.2 699.0 297.0 Z" fill="none" stroke="url(#bcs)" stroke-width="1.2"/>
 <g fill="#e0d6ec"><circle cx="726" cy="273" r="1.4"/><circle cx="748" cy="269" r="1.4"/><circle cx="762" cy="274" r="1"/><circle cx="775" cy="269" r="1.3"/><circle cx="788" cy="314" r="1.2"/><circle cx="783" cy="328" r="1"/><circle cx="767" cy="337" r="1.2"/><circle cx="697" cy="355" r="0"/></g>
 <!-- upper fin -->
 <path d="M780 243.5 L809 250.5 L806 262 L797 263 Z" fill="#2b2424"/>
 <path d="M781 243.6 L809 250.2 L808 252.5 L782.5 245.2 Z" fill="#8a8080"/>
 <!-- lower fin -->
 <path d="M816.5 306 L837.5 301 L823 333 Z" fill="#2b2424"/>
 <!-- engine -->
 <path d="M787 281 L801 277 L808 301 L795 305 Z" fill="#3a3434"/><path d="M790 296 L806 290 L808 299 L795 305 Z" fill="#d9d4d8"/>
 <path d="M784.5 278.5 L798.5 306.8" stroke="#ea3f2a" stroke-width="2.6" stroke-linecap="round"/>
 <!-- rocket body -->
 <path d="M884 250 C 880 243 870 240 857 238.5 C 840 238 822 244 806 258 C 799 266 797 280 802 291 C 805 298 812 303 824 304.5 C 840 302 858 294 872 281 C 880 272 885 260 884 250 Z" fill="url(#rk)"/>
 <path d="M806 258 C 822 244 840 238 857 238.5 C 870 240 880 243 884 250 C 870 246 850 245 830 251 C 818 255 810 262 806 270 Z" fill="#f47b5c" opacity="0.7"/>
 <!-- light triangles -->
 <path d="M831.5 257 L854 250.5 L835.5 265.5 Z" fill="#f6c0b4" opacity="0.9"/>
 <path d="M863.5 274.7 L878.8 258.2 L871.7 274.7 Z" fill="#f7b898" opacity="0.9"/>
 <!-- stripes -->
 <path d="M833.6 241 L837.2 240.3 L861.5 289.3 L858.3 291 Z" fill="#f4e6e8"/>
 <path d="M854.8 239.4 L858.2 239.2 L875.5 272.5 L872.5 274.5 Z" fill="#f4e6e8"/>
 <path d="M830 277.5 L833.3 276.5 L845 298.5 L841.8 299.5 Z" fill="#f4e6e8"/>
 <!-- porthole -->
 <rect x="811" y="285.5" width="14" height="6" rx="3" transform="rotate(25 818 288.5)" fill="#c8c0c8" stroke="#f0eaf0" stroke-width="1"/>
 <!-- laptop -->
 <path d="M859 219.5 L866 219.5 L864 238 L857.5 238 Z" fill="#f59ab8"/>
 <path d="M840 236.5 L864 236.5 L863 239 L840 239.5 Z" fill="#d668c8"/>
 <!-- arms (behind) -->
 <path d="M826 211 C 836 213 846 211 854 208.5 L 857 213.5 C 847 216.5 836 219 826 218 Z" fill="#f3cbb3"/>
 <path d="M852 208.8 L853.2 201.8 L856 202 L856.6 208 L860.2 208.6 L860 213.2 L855 213.5 Z" fill="#f3cbb3"/>
 <!-- shirt/body -->
 <path d="M809 205.5 C 817 202.5 825 203.5 829.5 207.5 C 830 214 829.5 222 829 228 L 832 238 C 824 241 812 243 803 243 C 799 232 800 214 809 205.5 Z" fill="url(#sh)"/>
 <path d="M815 206 C 822 204 828 205 830.5 208.5 L 830 221.5 C 826 223 821 223 817.5 221.5 Z" fill="#f07a62"/>
 <path d="M803 242 C 814 241 826 239 834 236" stroke="#f2b830" stroke-width="1.2" fill="none"/>
 <path d="M818 220 C 826 228 840 231 852 231 L 856 231.5 L 856 236 C 844 236.5 830 235 818 228 Z" fill="#f0c3a8"/>
 <!-- thigh and leg -->
 <path d="M812 242 C 822 240 832 240 836 244 C 838 252 838 262 836 271 C 830 276 822 277 812 277 L 811 266 C 818 266 824 265 826 262 C 822 256 814 252 812 242 Z" fill="url(#lg)"/>
 <!-- shoe -->
 <path d="M794 271 C 800 268 806 268 812 267 L 813 277 L 806 280 L 800 292 L 795 291 C 793 283 793 276 794 271 Z" fill="#f3d6ea"/>
 <path d="M803 264.5 L 810 262 L 811 267 L 804 269 Z" fill="#d870d8"/>
 <!-- head -->
 <circle cx="815.5" cy="187" r="6.5" fill="#3b3044"/>
 <path d="M813 200 C 812 193 817 190 822 191 C 826 192 828 195 827 198 L 821 199 L 819 203 Z" fill="#2f2a3e"/>
 <path d="M821 196 L 827 197 L 827 201 L 822 203 Z" fill="#f6d6c4"/>
<!--/ILLU-->
 <g transform="translate(683 424.4) scale(1.155 1)"><text x="0" y="0" font-family="Liberation Sans" font-weight="bold" font-size="21" fill="#111" stroke="#111" stroke-width="0.45">Discover the world</text></g>
 <g transform="translate(688 457.4) scale(1.155 1)"><text x="0" y="0" font-family="Liberation Sans" font-weight="bold" font-size="21" fill="#111" stroke="#111" stroke-width="0.45">with us</text></g>
 <rect x="655.8" y="644.3" width="19" height="7" rx="3.5" fill="#ff4545" stroke="#f21f1f" stroke-width="0.8"/>
 <rect x="680" y="644.3" width="11" height="7" rx="3.5" fill="#000"/>
 <rect x="695.8" y="644.3" width="11" height="7" rx="3.5" fill="#000"/>
 <rect x="871" y="631.3" width="55.6" height="33" rx="13" fill="#000"/>
 <path d="M896.8 640.6 L904.2 648 L896.8 655.4" fill="none" stroke="#fff" stroke-width="1.9"/>
</svg></div></div>
  <div id="side"></div>
</div>
<svg class="abs" style="left:946px;top:60px" width="42" height="621" viewBox="946 60 42 621">
 <g fill="#fff">
  <rect x="955" y="73.5" width="25.5" height="3" rx="1.2"/>
  <rect x="955" y="80.4" width="25.5" height="3" rx="1.2"/>
  <rect x="955" y="87.2" width="25.5" height="3" rx="1.2"/>
 </g>
 <rect x="953" y="105" width="28" height="1" fill="#4a4a4a"/>
 <rect x="953" y="605.5" width="28" height="1" fill="#3e3e3e"/>
 <g fill="none" stroke="#fff" stroke-width="1.5" stroke-linejoin="round">
  <rect x="958" y="121.8" width="16.5" height="10.5" rx="1.5" transform="rotate(48 966.2 127)"/>
  <path d="M967.5 116.6 A 10.5 10.5 0 0 1 977.3 127.5"/><path d="M966.8 116.5 L969.6 115.2 L969.2 118.2 Z" fill="#fff" stroke-width="0.8"/>
 </g>
 <g fill="#fff">
  <path d="M958.3 167 L973.5 167 L973.5 177 L958.3 177 Z"/>
  <path d="M957.6 161.8 L971.3 157.2 L972.8 161.4 L959.1 166 Z"/>
 </g>
 <g fill="#1f1f1f">
  <path d="M960.5 167 L962.8 167 L961.8 169 L959.5 169 Z"/><path d="M965 167 L967.3 167 L966.3 169 L964 169 Z"/><path d="M969.5 167 L971.8 167 L970.8 169 L968.5 169 Z"/>
  <path d="M960.8 160.8 L962.8 160 L964.3 163.6 L962.3 164.4 Z"/><path d="M965.2 159.3 L967.2 158.6 L968.7 162.2 L966.7 162.9 Z"/>
 </g>
 <rect x="957.5" y="200.3" width="18.2" height="18.5" fill="none" stroke="#fff" stroke-width="1.9"/>
 <text x="966.6" y="214.3" font-family="Liberation Sans" font-weight="bold" font-size="11" fill="#fff" text-anchor="middle">ID</text>
 <g fill="#fff">
  <path d="M958.5 240 L962.5 240 L961.2 241.3 L963 243.2 L961.7 244.5 L959.8 242.6 L958.5 244 Z"/>
  <path d="M978 240 L974 240 L975.3 241.3 L973.5 243.2 L974.8 244.5 L976.7 242.6 L978 244 Z"/>
  <path d="M958.5 262 L962.5 262 L961.2 260.7 L963 258.8 L961.7 257.5 L959.8 259.4 L958.5 258 Z"/>
  <path d="M978 262 L974 262 L975.3 260.7 L973.5 258.8 L974.8 257.5 L976.7 259.4 L978 258 Z"/>
 </g>
 <text x="967.5" y="254.6" font-family="Liberation Sans" font-weight="bold" font-size="7" fill="#fff" text-anchor="middle" letter-spacing="0.3">1 : 1</text>
 <g fill="none" stroke="#fff" stroke-width="3.6">
  <path d="M956.8 284.3 A 16 16 0 0 1 972.5 300"/>
  <path d="M956.8 291.2 A 9.2 9.2 0 0 1 965.8 300"/>
 </g>
 <path d="M956.5 295.8 A 4.2 4.2 0 0 1 960.7 300 L956.5 300 Z" fill="#fff"/>
 <path d="M963.8 327.5 L972.5 327.5 Q973.8 327.5 973.8 328.8 L973.8 342 Q973.8 343 972.8 343 L961.4 343 Q960.4 343 960.4 342 L960.4 331 Z" fill="#fff"/>
 <g fill="#1f1f1f"><rect x="963.2" y="333.8" width="2" height="2"/><rect x="966.2" y="333.8" width="2" height="2"/><rect x="969.2" y="333.8" width="2" height="2"/><rect x="963.2" y="336.9" width="2" height="2"/><rect x="969.2" y="336.9" width="2" height="2"/><rect x="963.2" y="339.8" width="2" height="1.6"/><rect x="966.2" y="339.8" width="2" height="1.6"/><rect x="969.2" y="339.8" width="2" height="1.6"/></g>
 <g fill="none" stroke="#fff" stroke-width="1.3">
  <path d="M959.8 370.5 A 8 8 0 0 1 971 370.5"/>
  <path d="M961.6 372.4 A 5.3 5.3 0 0 1 969.2 372.4"/>
 </g>
 <path d="M963.2 374.2 A 3 3 0 0 1 967.6 374.2 L965.4 376 Z" fill="#fff"/>
 <text x="965" y="382.6" font-family="Liberation Sans" font-weight="bold" font-size="7.6" fill="#fff" text-anchor="middle">GPS</text>
 <g fill="#fff">
  <rect x="957" y="408" width="5" height="20"/><rect x="971.6" y="408" width="5" height="20"/>
  <rect x="957" y="408" width="19.6" height="1.6"/><rect x="957" y="426.4" width="19.6" height="1.6"/>
 </g>
 <g fill="#1f1f1f"><rect x="958.6" y="410.6" width="1.8" height="1.5"/><rect x="958.6" y="413.9" width="1.8" height="1.5"/><rect x="958.6" y="417.2" width="1.8" height="1.5"/><rect x="958.6" y="420.5" width="1.8" height="1.5"/><rect x="958.6" y="423.8" width="1.8" height="1.5"/>
 <rect x="973.2" y="410.6" width="1.8" height="1.5"/><rect x="973.2" y="413.9" width="1.8" height="1.5"/><rect x="973.2" y="417.2" width="1.8" height="1.5"/><rect x="973.2" y="420.5" width="1.8" height="1.5"/><rect x="973.2" y="423.8" width="1.8" height="1.5"/></g>
 <path d="M964.3 412.8 L970.2 418 L964.3 423.2 Z" fill="none" stroke="#fff" stroke-width="1.4"/>
 <g fill="none" stroke="#fff" stroke-width="1.1" stroke-linecap="round">
  <path d="M961.8 453.2 A 10 10 0 0 1 972.8 453.4"/>
  <path d="M959.8 457.5 A 8.5 8.5 0 0 1 974.6 456.8"/>
  <path d="M960 464.5 A 7.2 7.2 0 0 1 974.4 459.8 L974.6 463.5"/>
  <path d="M961.6 467.2 A 5.8 5.8 0 1 1 972.8 463 A 1.8 1.8 0 0 1 969.6 464"/>
  <path d="M964 469.4 A 3.6 3.6 0 1 1 970.2 462.4"/>
  <path d="M966.5 468.6 A 1.6 1.6 0 0 1 966.2 463.4"/>
  <path d="M969 469.8 A 5 5 0 0 0 974 466"/>
 </g>
 <g fill="none" stroke="#fff" stroke-width="2" stroke-linecap="round" stroke-linejoin="round">
  <path d="M962 494 Q959.4 494 959.4 496.6 L959.4 499.2 Q959.4 501.2 957.4 501.2 Q959.4 501.2 959.4 503.2 L959.4 505.8 Q959.4 508.3 962 508.3"/>
  <path d="M971.6 494 Q974.2 494 974.2 496.6 L974.2 499.2 Q974.2 501.2 976.2 501.2 Q974.2 501.2 974.2 503.2 L974.2 505.8 Q974.2 508.3 971.6 508.3"/>
 </g>
 <text x="967.3" y="542.5" font-family="Liberation Sans" font-weight="bold" font-size="9" fill="#fff" text-anchor="middle">Open</text>
 <text x="967.3" y="549.6" font-family="Liberation Sans" font-weight="bold" font-size="5.6" fill="#fff" text-anchor="middle">GAPPS</text>
 <path d="M972 576.8 L972 592.6 L959.8 584.7 Z" fill="none" stroke="#fff" stroke-width="2" stroke-linejoin="miter"/>
 <rect x="957" y="617" width="20.3" height="20" fill="#383838"/>
 <path d="M967.2 622.5 L967.2 632 M962.5 627.2 L972 627.2" stroke="#fff" stroke-width="1.8"/>
</svg>
<div class="abs" style="left:988px;top:60px;width:1px;height:621px;background:#141414;"></div>
</body></html>
